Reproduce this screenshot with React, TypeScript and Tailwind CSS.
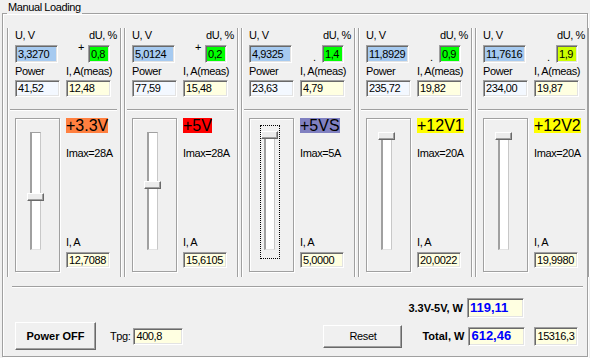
type Panel = {
  u: string;
  sign: "+" | ".";
  du: string;
  duBg: string;
  power: string;
  imeas: string;
  label: string;
  labelBg: string;
  imax: string;
  ia: string;
  thumb: number;
  focused?: boolean;
};

const panels: Panel[] = [
  { u: "3,3270", sign: "+", du: "0,8", duBg: "bg-[#00ff00]", power: "41,52", imeas: "12,48", label: "+3.3V", labelBg: "bg-[#ff8040]", imax: "Imax=28A", ia: "12,7088", thumb: 67 },
  { u: "5,0124", sign: "+", du: "0,2", duBg: "bg-[#00ff00]", power: "77,59", imeas: "15,48", label: "+5V", labelBg: "bg-[#ff0000]", imax: "Imax=28A", ia: "15,6105", thumb: 55 },
  { u: "4,9325", sign: ".", du: "1,4", duBg: "bg-[#00ff00]", power: "23,63", imeas: "4,79", label: "+5VS", labelBg: "bg-[#8080c0]", imax: "Imax=5A", ia: "5,0000", thumb: 5, focused: true },
  { u: "11,8929", sign: ".", du: "0,9", duBg: "bg-[#00ff00]", power: "235,72", imeas: "19,82", label: "+12V1", labelBg: "bg-[#ffff00]", imax: "Imax=20A", ia: "20,0022", thumb: 6 },
  { u: "11,7616", sign: ".", du: "1,9", duBg: "bg-[#ccff00]", power: "234,00", imeas: "19,87", label: "+12V2", labelBg: "bg-[#ffff00]", imax: "Imax=20A", ia: "19,9980", thumb: 6 },
];

function Field({ value, className }: { value: string; className: string }) {
  return (
    <div
      className={`flex items-center overflow-hidden whitespace-nowrap border border-t-[#a0a0a0] border-l-[#a0a0a0] border-b-white border-r-white pl-[2px] shadow-[inset_1px_1px_0_#696969,inset_-1px_-1px_0_#e3e3e3] ${className}`}
    >
      {value}
    </div>
  );
}

function Trackbar({ thumb, focused }: { thumb: number; focused?: boolean }) {
  return (
    <div className="ml-[10px] mt-[6px] h-[134px] w-[20px]">
      <div
        className={`relative h-full w-full border pl-[3px] pt-[6px] ${
          focused ? "border-dotted border-black" : "border-transparent"
        }`}
      >
        <div className="h-[118px] w-[11px] border-b border-l-2 border-r border-t border-b-[#e3e3e3] border-l-[#a0a0a0] border-r-[#c8c8c8] border-t-[#a0a0a0] bg-white" />
        {/* thumb */}
        <div
          className="absolute left-[0px] h-[8px] w-[17px] border border-b-[#696969] border-l-white border-r-[#696969] border-t-white bg-[#ececec] shadow-[inset_-1px_-1px_0_#a0a0a0]"
          style={{ top: thumb }}
        />
      </div>
    </div>
  );
}

function PanelCol({ p }: { p: Panel }) {
  return (
    <div className="pl-[4px]">
      <div className="h-[249px] w-[114px] border-x border-[#a0a0a0] pl-[7px] pt-[1px] shadow-[inset_1px_0_0_#fff,1px_0_0_#fff]">
        <div className="flex h-[13px] w-[102px] justify-between leading-[13px]">
          <span>U, V</span>
          <span>dU, %</span>
        </div>
        <div className="mt-[3px] flex h-[18px]">
          <Field value={p.u} className="h-[18px] w-[43px] bg-[#a6caf0]" />
          {p.sign === "+" ? (
            <span className="-mt-[4px] ml-[20px] w-[6px] self-start leading-[13px]">+</span>
          ) : (
            <span className="-mb-[1px] ml-[21px] w-[5px] self-end leading-[13px]">.</span>
          )}
          <Field value={p.du} className={`ml-[4px] h-[18px] w-[22px] ${p.duBg}`} />
        </div>
        <div className="mt-[2px] flex h-[13px] leading-[13px]">
          <span className="w-[51px]">Power</span>
          <span>I, A(meas)</span>
        </div>
        <div className="mt-[2px] flex h-[17px]">
          <Field value={p.power} className="h-[17px] w-[45px] bg-[#f3f8ff]" />
          <Field value={p.imeas} className="ml-[6px] h-[17px] w-[45px] bg-[#ffffe1]" />
        </div>
        <div className="-ml-[5px] mt-[12px] h-[2px] w-[107px] border-b border-t border-b-white border-t-[#a0a0a0]" />
        <div className="mt-[7px] flex">
          <div className="h-[154px] w-[45px] border border-[#a0a0a0] shadow-[inset_1px_1px_0_#fff,1px_1px_0_#fff]">
            <Trackbar thumb={p.thumb} focused={p.focused} />
          </div>
          <div className="ml-[6px] flex flex-col items-start">
            <span className={`h-[15px] text-[16px] leading-[15px] tracking-normal ${p.labelBg}`}>{p.label}</span>
            <span className="mt-[14px] h-[13px] leading-[13px]">{p.imax}</span>
            <span className="mt-[76px] h-[13px] leading-[13px]">I, A</span>
            <Field value={p.ia} className="mt-[3px] h-[16px] w-[44px] bg-[#ffffe1]" />
          </div>
        </div>
      </div>
    </div>
  );
}

export default function App() {
  return (
    <div className="h-[358px] w-[590px] overflow-hidden bg-[#f0f0f0] pl-[2px] pt-[13px] font-['Liberation_Sans',Arial,sans-serif] text-[11px] tracking-[-0.4px] text-black">
      <div className="relative h-[344px] w-[586px] border border-[#a0a0a0] shadow-[inset_1px_1px_0_#fff,1px_1px_0_#fff]">
        <span className="absolute -top-[13px] left-[4px] bg-[#f0f0f0] px-px leading-[13px]">Manual Loading</span>

        <div className="grid grid-cols-[repeat(5,117px)] pt-[14px]">
          {panels.map((p) => (
            <PanelCol key={p.label} p={p} />
          ))}
        </div>

        <div className="ml-[9px] mr-[4px] mt-[9px] h-[2px] border-b border-t border-b-white border-t-[#a0a0a0]" />

        <div className="mt-[10px] flex h-[20px] items-center">
          <span className="ml-[360px] w-[100px] text-right font-bold tracking-normal">3.3V-5V, W</span>
          <Field value="119,11" className="ml-[4px] h-[20px] w-[57px] bg-[#ffffe1] text-[13px] font-bold tracking-normal text-[#0000ff]" />
        </div>

        <div className="mt-[4px] flex h-[28px] items-center">
          <button className="ml-[12px] h-[28px] w-[81px] border border-b-[#696969] border-l-white border-r-[#696969] border-t-white bg-[#f0f0f0] font-bold tracking-normal shadow-[inset_-1px_-1px_0_#a0a0a0]">
            Power OFF
          </button>
          <span className="ml-[14px]">Tpg:</span>
          <Field value="400,8" className="ml-[3px] h-[17px] w-[50px] bg-[#ffffe1]" />
          <button className="ml-[140px] h-[23px] w-[79px] border border-b-[#696969] border-l-white border-r-[#696969] border-t-white bg-[#f0f0f0] shadow-[inset_-1px_-1px_0_#a0a0a0]">
            Reset
          </button>
          <span className="ml-[4px] w-[58px] text-right font-bold tracking-normal">Total, W</span>
          <Field value="612,46" className="ml-[4px] h-[19px] w-[57px] bg-[#ffffe1] text-[13px] font-bold tracking-normal text-[#0000ff]" />
          <Field value="15316,3" className="ml-[9px] h-[19px] w-[44px] bg-[#ffffe1]" />
        </div>
      </div>
    </div>
  );
}
